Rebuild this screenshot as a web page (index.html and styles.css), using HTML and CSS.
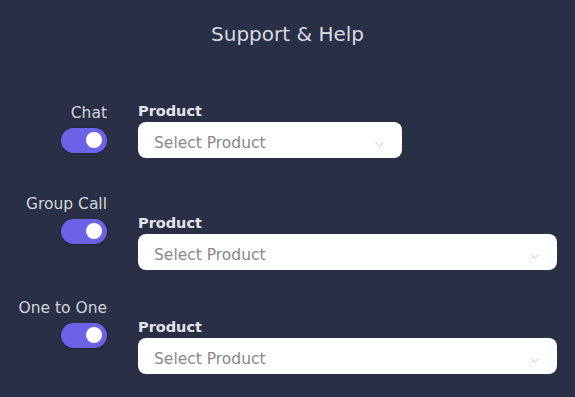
FILE: index.html
```html
<!DOCTYPE html>
<html lang="en">
<head>
    <meta charset="UTF-8">
    <meta name="viewport" content="width=device-width, initial-scale=1.0">
    <title>Support &amp; Help</title>
    <link rel="stylesheet" href="styles.css">
</head>
<body>
    <div class="panel">
        <h1>Support &amp; Help</h1>

        <div class="row row-first">
            <div class="channel">
                <div class="channel-name">Chat</div>
                <label class="switch">
                    <input type="checkbox" checked>
                    <span class="slider"></span>
                </label>
            </div>
            <div class="field field-short">
                <div class="field-label">Product</div>
                <div class="select">
                    <span>Select Product</span>
                    <svg class="chevron" width="9" height="5" viewBox="0 0 9 5"><path d="M0.5 0.5 L4.5 4.5 L8.5 0.5" fill="none" stroke="#c9cacf" stroke-width="1"/></svg>
                </div>
            </div>
        </div>

        <div class="row">
            <div class="channel">
                <div class="channel-name">Group Call</div>
                <label class="switch">
                    <input type="checkbox" checked>
                    <span class="slider"></span>
                </label>
            </div>
            <div class="field field-offset">
                <div class="field-label">Product</div>
                <div class="select">
                    <span>Select Product</span>
                    <svg class="chevron" width="9" height="5" viewBox="0 0 9 5"><path d="M0.5 0.5 L4.5 4.5 L8.5 0.5" fill="none" stroke="#c9cacf" stroke-width="1"/></svg>
                </div>
            </div>
        </div>

        <div class="row">
            <div class="channel">
                <div class="channel-name">One to One</div>
                <label class="switch">
                    <input type="checkbox" checked>
                    <span class="slider"></span>
                </label>
            </div>
            <div class="field field-offset">
                <div class="field-label">Product</div>
                <div class="select">
                    <span>Select Product</span>
                    <svg class="chevron" width="9" height="5" viewBox="0 0 9 5"><path d="M0.5 0.5 L4.5 4.5 L8.5 0.5" fill="none" stroke="#c9cacf" stroke-width="1"/></svg>
                </div>
            </div>
        </div>
    </div>
</body>
</html>
```

FILE: styles.css
```css
html, body {
    margin: 0;
    height: 100%;
    background-color: #292f45;
}
body {
    font-family: "DejaVu Sans", "Liberation Sans", sans-serif;
    color: #d6d8de;
}
.panel {
    padding: 22px 18px 0 0;
}
h1 {
    margin: 0 0 56px 18px;
    font-size: 20px;
    line-height: 24px;
    font-weight: 400;
    text-align: center;
    color: #d9dbe1;
}
.row {
    display: flex;
    align-items: flex-start;
    margin-top: 27px;
}
.row-first {
    margin-top: 0;
    margin-bottom: 35px;
}
.channel {
    width: 107px;
    flex-shrink: 0;
    margin-right: 31px;
    display: flex;
    flex-direction: column;
    align-items: flex-end;
    padding-top: 1.5px;
}
.channel-name {
    font-size: 15.5px;
    line-height: 18px;
    margin-bottom: 6px;
    color: #d3d5dc;
    white-space: nowrap;
}
.switch {
    display: block;
    cursor: pointer;
}
.switch input {
    display: none;
}
.slider {
    display: flex;
    align-items: center;
    justify-content: flex-end;
    width: 46px;
    height: 25px;
    padding-right: 5px;
    box-sizing: border-box;
    border-radius: 13px;
    background-color: #6c62e7;
    box-shadow: 0 1px 3px rgba(0,0,0,0.25);
}
.slider::after {
    content: "";
    width: 16px;
    height: 16px;
    border-radius: 50%;
    background: #fff;
}
.field {
    flex: 1;
}
.field-short {
    flex: 0 0 264px;
}
.field-offset {
    margin-top: 21px;
}
.field-label {
    font-size: 14.5px;
    line-height: 18px;
    font-weight: 700;
    color: #e2e4ea;
    margin-bottom: 2px;
}
.select {
    display: flex;
    align-items: center;
    justify-content: space-between;
    height: 36px;
    box-sizing: border-box;
    padding: 5px 18px 0 16px;
    background: #fff;
    border-radius: 8px;
    font-size: 15.5px;
    color: #86878e;
}
.chevron {
    margin-top: 3px;
}
```
